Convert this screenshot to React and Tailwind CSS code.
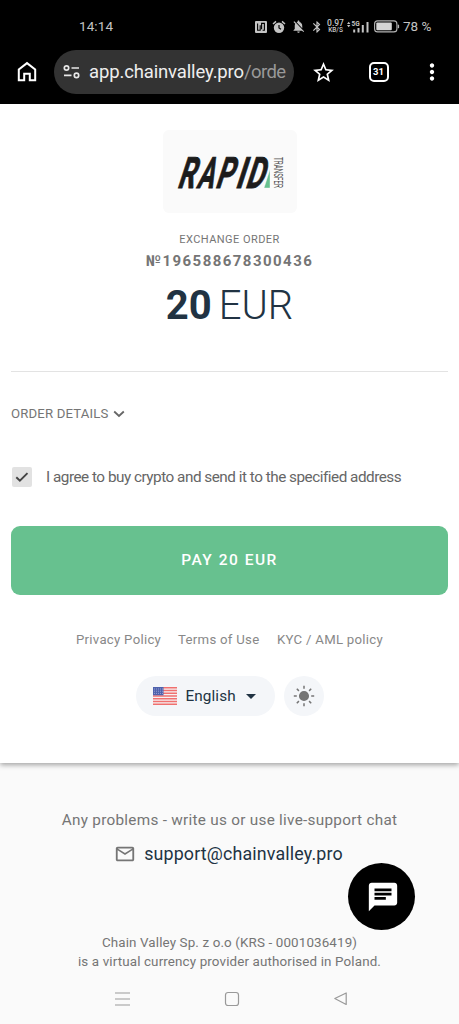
import React, { useState } from "react";
import {
  MdArrowDropDown,
  MdBluetooth,
  MdChat,
  MdMoreVert,
  MdNotificationsOff,
  MdOutlineEmail,
  MdStarBorder,
} from "react-icons/md";

const links = [
  { label: "Privacy Policy", width: "w-[84px]" },
  { label: "Terms of Use", width: "w-[81px]" },
  { label: "KYC / AML policy", width: "w-[106px]" },
];

// x of every letter's foot and its drawn width
const logoLetters = [
  { char: "R", x: 13.5, width: 17 },
  { char: "A", x: 33, width: 16.5 },
  { char: "P", x: 51.5, width: 17 },
  { char: "I", x: 71.5, width: 8.5 },
  { char: "D", x: 81.5, width: 18 },
];

const StatusBar = () => (
  <div className="flex h-[50px] items-center pt-[3px] pl-[79px] text-[#c4c4c4]">
    <span className="w-[176px] text-[13.5px] tracking-[0.1px]">14:14</span>
    <svg width="12" height="12" viewBox="0 0 12 12" className="shrink-0">
      <rect width="12" height="12" rx="1" fill="#c4c4c4" />
      <path d="M2.6 2.4v6.8h2.6V4.2M6.6 8.2V2.4h2.8v6.8H7.6" fill="none" stroke="#000" strokeWidth="1.1" />
    </svg>
    <svg width="14" height="14" viewBox="0 0 14 14" className="ml-[5px] shrink-0">
      <circle cx="7" cy="7.8" r="5.2" fill="#c4c4c4" />
      <path d="M1 4L4 1.4M13 4L10 1.4" stroke="#c4c4c4" strokeWidth="1.5" />
      <path d="M7 5v3l2 1.2" fill="none" stroke="#000" strokeWidth="1.2" />
    </svg>
    <MdNotificationsOff size={15} className="ml-[5px] shrink-0" />
    <MdBluetooth size={14} className="ml-[4px] shrink-0" />
    <div className="ml-[2px] flex w-[19px] shrink-0 flex-col items-center font-medium">
      <span className="text-[8.5px] leading-[7px] whitespace-nowrap">0.97</span>
      <span className="text-[6.5px] leading-[7px] whitespace-nowrap">KB/S</span>
    </div>
    <svg width="23" height="14" viewBox="0 0 23 14" className="ml-[2px] shrink-0">
      <path d="M0 4l1.7-2.2L3.4 4zM0 5l1.7 2.2L3.4 5z" fill="#c4c4c4" />
      <text x="4.5" y="6" fontSize="6.5" fontWeight="700" fill="#c4c4c4">5G</text>
      <path d="M7.2 12.5v-3M11.5 12.5V8M15.8 12.5V5M20.5 12.5V2" stroke="#c4c4c4" strokeWidth="2" />
    </svg>
    <svg width="26" height="13" viewBox="0 0 26 13" className="ml-[4px] shrink-0">
      <rect x="0.6" y="0.9" width="22.3" height="11" rx="3" fill="none" stroke="#b4b4b4" strokeWidth="1.1" />
      <rect x="2.3" y="2.5" width="15.5" height="7.8" rx="1" fill="#d6d6d6" />
      <path d="M24.4 4.7v3.5" stroke="#b4b4b4" strokeWidth="1.4" />
    </svg>
    <span className="ml-[3px] text-[13.5px] whitespace-nowrap">78 %</span>
  </div>
);

const AddressBar = () => (
  <div className="flex h-[54px] items-start text-white">
    <div className="flex h-11 w-[54px] items-center pl-[15px]">
      <svg width="24" height="24" viewBox="0 0 24 24" fill="none" stroke="currentColor" strokeWidth="2">
        <path d="M3.8 20.2V9.4L12 3.1l8.2 6.3v10.8h-5.4v-6.4H9.2v6.4z" />
      </svg>
    </div>
    <div className="flex h-11 w-[240px] items-center rounded-full bg-[#333] pl-[9px]">
      <svg width="18" height="16" viewBox="0 0 18 16" fill="none" stroke="#e8e8e8" strokeWidth="1.7">
        <circle cx="3.5" cy="4" r="2.2" />
        <path d="M8.5 4H16M1 11.4h7.5" />
        <circle cx="13.5" cy="11.4" r="2.2" />
      </svg>
      <div className="ml-[8px] pt-[2px] text-[18.5px] tracking-[-0.14px] whitespace-nowrap text-[#eee]">
        app.chainvalley.pro<span className="tracking-[-0.6px] text-[#999]">/orde</span>
      </div>
    </div>
    <div className="flex h-11 w-[58px] items-center justify-center">
      <MdStarBorder size={25} />
    </div>
    <div className="flex h-11 w-[53px] items-center justify-center">
      <div className="flex h-5 w-5 items-center justify-center rounded-[5px] border-2 border-white text-[9.5px] font-bold">
        31
      </div>
    </div>
    <div className="flex h-11 w-[54px] items-center justify-center">
      <MdMoreVert size={26} />
    </div>
  </div>
);

const Logo = () => (
  <div className="flex h-[83px] w-[134px] items-center justify-center rounded-md bg-[#fafafa]">
    <svg width="134" height="83" viewBox="0 0 134 83" className="overflow-visible">
      {logoLetters.map(({ char, x, width }) => (
        <g key={char} transform={`translate(${x} 57.6) skewX(-18) scale(1 1.31)`}>
          <text
            fontFamily="Roboto"
            fontSize="33"
            fontWeight="700"
            textLength={width}
            lengthAdjust="spacingAndGlyphs"
            fill="#1c1c1c"
            stroke="#1c1c1c"
            strokeWidth="0.7"
          >
            {char}
          </text>
        </g>
      ))}
      <path d="M101 58l6-18.5V58z" fill="#67c18f" stroke="#fafafa" strokeWidth="0.4" />
      <g transform="translate(110.7 27) rotate(90)">
        <text fontFamily="Roboto" fontSize="12" textLength="31" lengthAdjust="spacingAndGlyphs" fill="#555">
          TRANSFER
        </text>
      </g>
    </svg>
  </div>
);

const UsFlag = () => (
  <svg width="24" height="18" viewBox="0 0 24 18">
    <rect width="24" height="18" fill="#f6f2f3" />
    <path
      d="M0 .7h24M0 3.5h24M0 6.2h24M0 9h24M0 11.8h24M0 14.5h24M0 17.3h24"
      stroke="#f0706f"
      strokeWidth="1.4"
    />
    <rect width="10.5" height="8.3" fill="#4f62ad" />
    <path d="M1 2h9M1 4.2h9M1 6.4h9" stroke="#a9b2dc" strokeWidth=".8" strokeDasharray="1 1" />
  </svg>
);

const Sun = () => (
  <svg width="24" height="24" viewBox="0 0 24 24" fill="#757575" stroke="#757575" strokeWidth="1.5">
    <circle cx="12" cy="12" r="4.3" />
    <path d="M12 1.8v3M12 19.2v3M1.8 12h3M19.2 12h3M4.8 4.8l2.1 2.1M17.1 17.1l2.1 2.1M19.2 4.8l-2.1 2.1M6.9 17.1l-2.1 2.1" />
  </svg>
);

export default function App() {
  const [agreed, setAgreed] = useState(true);

  return (
    <div className="flex h-[1024px] w-[459px] flex-col overflow-hidden bg-[#fafafa] font-[Roboto,sans-serif] text-[#757575]">
      <header className="h-[104px] shrink-0 bg-black">
        <StatusBar />
        <AddressBar />
      </header>

      <main className="relative h-[659px] shrink-0 bg-white px-[11px] pt-[26px] shadow-[0_2px_5px_rgba(0,0,0,0.35)]">
        <div className="flex flex-col items-center">
          <Logo />
          <div className="mt-[19px] text-[11px] leading-4 tracking-[0.45px]">EXCHANGE ORDER</div>
          <div className="mt-[3px] text-[15px] leading-5 font-bold tracking-[1.45px]">№196588678300436</div>
          <div className="mt-[11px] flex h-[48px] items-center gap-[7px] text-[40px] leading-[48px] text-[#213343]">
            <span className="font-bold">20</span>
            <span className="font-light">EUR</span>
          </div>
        </div>

        <hr className="mt-[41px] border-[#e3e3e3]" />

        <button className="mt-[31px] flex h-5 items-center pt-px text-[13.2px] tracking-[0.15px]">
          ORDER DETAILS
          <svg width="12" height="8" viewBox="0 0 12 8" className="ml-[5px]">
            <path d="M1.2 1.5L6 6l4.8-4.5" fill="none" stroke="#666" strokeWidth="1.8" />
          </svg>
        </button>

        <label className="mt-[44px] flex h-5 items-center">
          <button
            className="ml-px flex h-5 w-5 items-center justify-center rounded-[2px] bg-[#e2e2e2]"
            onClick={() => setAgreed(!agreed)}
          >
            {agreed && (
              <svg width="14" height="12" viewBox="0 0 14 12">
                <path d="M1.3 6.2l3.6 3.5 7.6-7.6" fill="none" stroke="#444" strokeWidth="1.9" />
              </svg>
            )}
          </button>
          <span className="ml-[14px] pt-px text-[15.3px] tracking-[-0.49px] whitespace-nowrap text-[#666]">
            I agree to buy crypto and send it to the specified address
          </span>
        </label>

        <button className="mt-[39px] flex h-[69px] w-full items-center justify-center rounded-[9px] bg-[#67c18f] pt-px text-[15.5px] font-medium tracking-[1.5px] text-white">
          PAY 20 EUR
        </button>

        <nav className="mt-[35px] flex h-5 justify-center gap-[18px] text-[13.2px] leading-5 tracking-[0.28px] text-[#888]">
          {links.map((link) => (
            <a key={link.label} className={`${link.width} whitespace-nowrap`}>
              {link.label}
            </a>
          ))}
        </nav>

        <div className="mt-[26px] flex justify-center gap-[9px]">
          <button className="flex h-10 w-[139px] items-center rounded-full bg-[#f4f6f9] pl-[17px] text-[#213343]">
            <UsFlag />
            <span className="ml-[9px] text-[15.3px] tracking-[0.1px]">English</span>
            <MdArrowDropDown size={24} className="ml-[3px]" />
          </button>
          <button className="flex h-10 w-10 items-center justify-center rounded-full bg-[#f4f6f9]">
            <Sun />
          </button>
        </div>
      </main>

      <footer className="relative flex h-[261px] shrink-0 flex-col items-center pt-[47px]">
        <p className="text-[15.3px] leading-5 tracking-[0.28px] whitespace-nowrap">
          Any problems - write us or use live-support chat
        </p>
        <div className="mt-[12px] flex h-6 items-center pr-[2px]">
          <MdOutlineEmail size={22} />
          <span className="ml-[8px] text-[17.85px] tracking-[0.15px] text-[#213343]">support@chainvalley.pro</span>
        </div>
        <p className="mt-[67px] text-center text-[13.4px] leading-[19px] tracking-[0.13px] whitespace-nowrap">
          Chain Valley Sp. z o.o (KRS - 0001036419)
          <br />
          is a virtual currency provider authorised in Poland.
        </p>
        <button className="absolute top-[100px] left-[348px] flex h-[67px] w-[67px] items-center justify-center rounded-full bg-black pt-px pl-[2px] text-white">
          <MdChat size={34} />
        </button>
        <div className="mt-[20px] flex w-full items-center justify-between pr-[110px] pl-[115px]">
          <svg width="15" height="16" viewBox="0 0 15 16" stroke="#999" strokeWidth="1.2">
            <path d="M0 2h15M0 8h15M0 14h15" />
          </svg>
          <svg width="16" height="16" viewBox="0 0 16 16" fill="none" stroke="#999" strokeWidth="1.2">
            <rect x="1.5" y="1.5" width="13" height="13" rx="2.5" />
          </svg>
          <svg width="16" height="16" viewBox="0 0 16 16" fill="none" stroke="#999" strokeWidth="1.2" strokeLinejoin="round">
            <path d="M1.8 7.5L13.2 2v11.5z" />
          </svg>
        </div>
      </footer>
    </div>
  );
}
